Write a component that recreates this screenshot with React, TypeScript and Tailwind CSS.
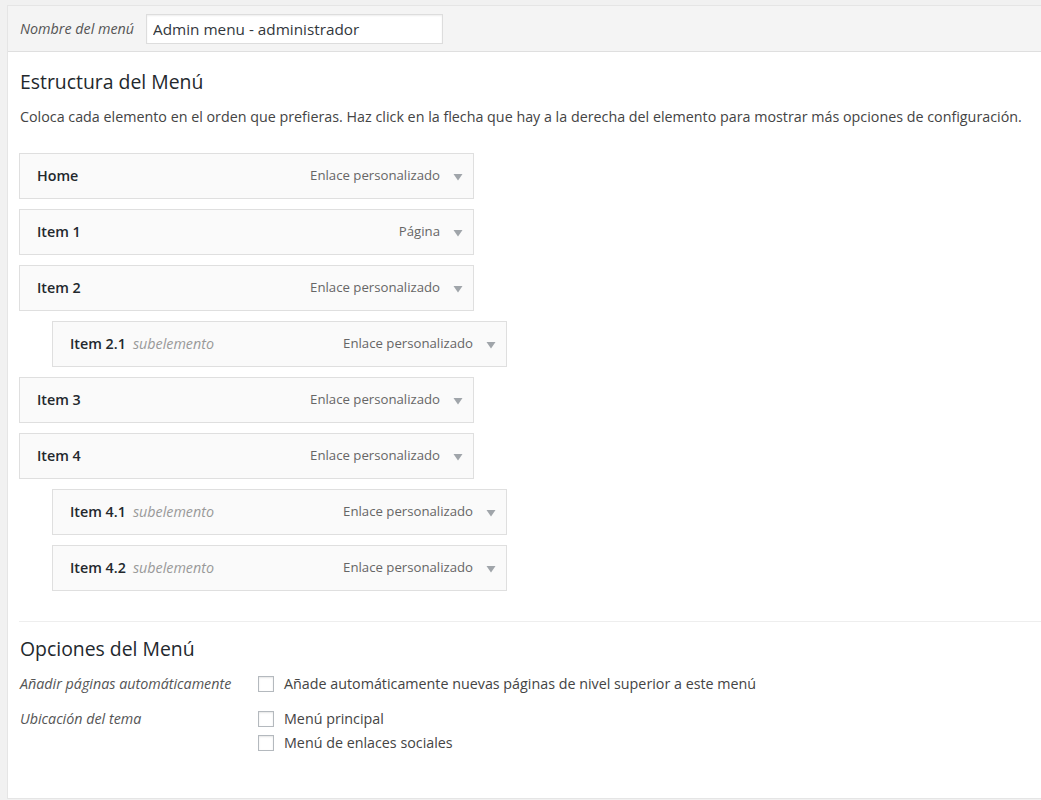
import { useState } from 'react'

type MenuItem = {
  title: string
  type: string
  depth: 0 | 1
}

const items: MenuItem[] = [
  { title: 'Home', type: 'Enlace personalizado', depth: 0 },
  { title: 'Item 1', type: 'Página', depth: 0 },
  { title: 'Item 2', type: 'Enlace personalizado', depth: 0 },
  { title: 'Item 2.1', type: 'Enlace personalizado', depth: 1 },
  { title: 'Item 3', type: 'Enlace personalizado', depth: 0 },
  { title: 'Item 4', type: 'Enlace personalizado', depth: 0 },
  { title: 'Item 4.1', type: 'Enlace personalizado', depth: 1 },
  { title: 'Item 4.2', type: 'Enlace personalizado', depth: 1 },
]

const font = { fontFamily: '"Open Sans", "Noto Sans", sans-serif' }

function Checkbox({ label }: { label: string }) {
  const [checked, setChecked] = useState(false)
  return (
    <label className="flex items-center h-6 cursor-pointer text-[14.3px] text-[#444]">
      <span
        onClick={() => setChecked(!checked)}
        className="w-4 h-4 mr-[10px] border border-[#b4b9be] bg-white shadow-[inset_0_1px_2px_rgba(0,0,0,0.1)] flex items-center justify-center text-[#1e8cbe] text-xs"
      >
        {checked ? '✓' : ''}
      </span>
      {label}
    </label>
  )
}

function App() {
  return (
    <div className="min-h-[800px] bg-[#f1f1f1] pt-[5px] pl-[7px]" style={font}>
      <div className="bg-white border-t border-l border-b border-[#e5e5e5] h-[794px] flex flex-col">
        {/* Menu name bar */}
        <div className="h-[46px] bg-[#f4f4f4] border-b border-[#dfdfdf] flex items-center pl-3 shrink-0">
          <span className="text-[14.3px] italic text-[#555] w-[126px]">Nombre del menú</span>
          <input
            defaultValue="Admin menu - administrador"
            className="w-[297px] h-[30px] border border-[#ddd] bg-white px-[6px] text-[15.3px] text-[#32373c] shadow-[inset_0_1px_2px_rgba(0,0,0,0.07)] outline-none"
          />
        </div>

        <div className="pl-[11px] pt-4">
          <h3 className="pl-px text-[19.4px] leading-7 text-[#23282d]">Estructura del Menú</h3>
          <p className="pl-px text-[14.3px] leading-5 text-[#444] mt-[11px]">
            Coloca cada elemento en el orden que prefieras. Haz click en la flecha que hay a la derecha del elemento para mostrar más opciones de configuración.
          </p>

          <ul className="mt-[26px] flex flex-col gap-[10px]">
            {items.map((item) => (
              <li
                key={item.title}
                className={`w-[455px] h-[46px] border border-[#dfdfdf] bg-[#fafafa] flex items-center pl-[17px] pr-[10px] ${item.depth === 1 ? 'ml-[33px]' : ''}`}
              >
                <span className="text-[14.3px] font-semibold text-[#23282d]">{item.title}</span>
                {item.depth === 1 && (
                  <span className="ml-[7px] text-[14.3px] italic text-[#999]">subelemento</span>
                )}
                <span className="ml-auto text-[13.2px] text-[#666]">{item.type}</span>
                <svg width="10" height="8" viewBox="0 0 10 8" className="ml-[13px] mt-[2px]">
                  <path d="M0.5 1 L9.5 1 L5 7.5 Z" fill="#a0a5aa" />
                </svg>
              </li>
            ))}
          </ul>

          <div className="mt-[30px] border-t border-[#eee]" />

          <h3 className="pl-px mt-[13px] text-[19.4px] leading-7 text-[#23282d]">Opciones del Menú</h3>

          <div className="mt-[7px] flex">
            <span className="pl-px w-[239px] text-[14.3px] italic text-[#555] leading-6 pt-[2px]">Añadir páginas automáticamente</span>
            <div className="pt-[2px]">
              <Checkbox label="Añade automáticamente nuevas páginas de nivel superior a este menú" />
            </div>
          </div>

          <div className="mt-[11px] flex">
            <span className="pl-px w-[239px] text-[14.3px] italic text-[#555] leading-6">Ubicación del tema</span>
            <div className="flex flex-col">
              <Checkbox label="Menú principal" />
              <Checkbox label="Menú de enlaces sociales" />
            </div>
          </div>
        </div>
      </div>
    </div>
  )
}

export default App
